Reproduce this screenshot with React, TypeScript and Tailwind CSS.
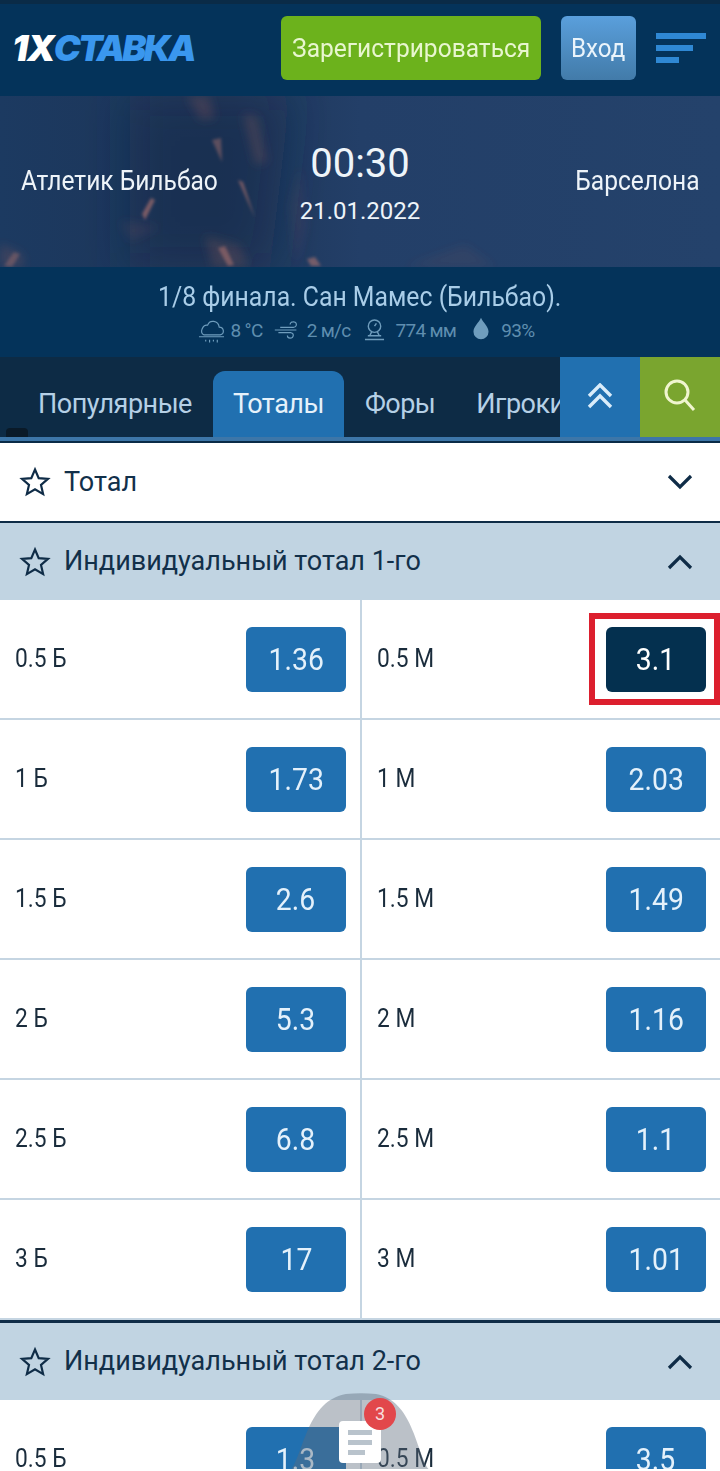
import React from "react";

const font = { fontFamily: "Roboto, 'Noto Sans', sans-serif" };

function Star() {
  return (
    <svg width="32" height="32" viewBox="0 0 32 32" fill="none" stroke="#0f2c47" strokeWidth="2.2" strokeLinejoin="miter" className="shrink-0">
      <path d="M16 3.5l3.7 8.6 9.3.8-7 6.1 2.1 9.1-8.1-4.8-8.1 4.8 2.1-9.1-7-6.1 9.3-.8z" />
    </svg>
  );
}

function Chevron({ up }: { up?: boolean }) {
  return (
    <svg width="26" height="16" viewBox="0 0 26 16" fill="none" stroke="#0f2c47" strokeWidth="3.2" className="shrink-0">
      <path d={up ? "M2 14L13 3l11 11" : "M2 2l11 11L24 2"} />
    </svg>
  );
}

function SectionHead({ title, open }: { title: string; open?: boolean }) {
  return (
    <div className={`flex items-center pl-[19px] pr-[27px] ${open ? "h-[77px] bg-[#c1d4e2]" : "h-[78px] bg-white"} `}>
      <Star />
      <span className="ml-[13px] flex-1 text-[27px] leading-none text-[#12304a]">{title}</span>
      <Chevron up={open} />
    </div>
  );
}

function Odd({ value, selected }: { value: string; selected?: boolean }) {
  return (
    <div className={`flex h-[65px] w-[100px] shrink-0 items-center justify-center rounded-[6px] ${selected ? "bg-[#04304f] text-white" : "bg-[#2170b0] text-[#e4f1fb]"}`}>
      <span className="inline-block origin-center scale-x-[0.915] text-[31px] leading-none">{value}</span>
    </div>
  );
}

function Row({ l, lo, r, ro, sel }: { l: string; lo: string; r: string; ro: string; sel?: boolean }) {
  return (
    <div className="flex h-[120px] border-b-2 border-[#c5d5e2] bg-white">
      <div className="flex w-[360px] items-center justify-between pl-[15px] pr-[14px] pt-[1px]">
        <span className="mb-[2px] origin-left scale-x-[0.91] text-[25px] leading-none text-[#1a2c3c]">{l}</span>
        <Odd value={lo} />
      </div>
      <div className="w-[2px] bg-[#c5d5e2]" />
      <div className="relative flex flex-1 items-center justify-between pl-[15px] pr-[14px] pt-[1px]">
        <span className="mb-[2px] origin-left scale-x-[0.91] text-[25px] leading-none text-[#1a2c3c]">{r}</span>
        <Odd value={ro} selected={sel} />
        {sel && <div className="absolute left-[227px] top-[13px] h-[92px] w-[131px] border-[6px] border-[#dc1f2e]" />}
      </div>
    </div>
  );
}

function BannerArt() {
  return (
    <svg className="absolute inset-0 h-full w-full" viewBox="0 0 720 171" preserveAspectRatio="none">
      <defs>
        <filter id="bl4" x="-50%" y="-50%" width="200%" height="200%"><feGaussianBlur stdDeviation="5" /></filter>
        <filter id="bl8" x="-50%" y="-50%" width="200%" height="200%"><feGaussianBlur stdDeviation="22" /></filter>
        <filter id="bl1" x="-50%" y="-50%" width="200%" height="200%"><feGaussianBlur stdDeviation="1.4" /></filter>
        <linearGradient id="bgfade" x1="0" x2="1" y1="0" y2="0">
          <stop offset="0" stopColor="#1c3a61" />
          <stop offset="0.3" stopColor="#1d3558" />
          <stop offset="0.5" stopColor="#233f68" />
          <stop offset="1" stopColor="#24426b" />
        </linearGradient>
      </defs>
      <rect width="720" height="171" fill="url(#bgfade)" />
      <path d="M130 0h160l-20 171H130z" fill="#1a2c4c" fillOpacity="0.5" filter="url(#bl8)" />
      <g filter="url(#bl4)" fill="#7d5257" fillOpacity="0.32">
        <path d="M187 0h22l6 22-14 2z" />
        <path d="M243 18l14 2 10 46-12 2z" />
        <path d="M0 148l22 10 2 13H0z" />
        <path d="M120 125l40 6-30 14z" fillOpacity="0.18" />
        <path d="M405 171l60-22 30 22z" fillOpacity="0.14" />
        <path d="M290 110l10-40 6 60-10 40z" fillOpacity="0.16" />
        <path d="M205 140l35 10 8 21h-35z" fillOpacity="0.3" />
      </g>
      <g filter="url(#bl1)" fill="#b9776f">
        <path d="M212 44l9-2 1 24z" fillOpacity="0.42" />
        <path d="M238 84l5 2 12 36z" fillOpacity="0.55" />
        <path d="M151 102l4 2-10 20-3-6z" fillOpacity="0.6" />
        <path d="M218 152l7-2 9 19-6 1z" fillOpacity="0.5" />
        <path d="M307 163l8-2 6 9h-10z" fillOpacity="0.55" />
        <path d="M4 170l10-14 6 2-8 13z" fillOpacity="0.35" />
      </g>
    </svg>
  );
}

function Weather() {
  const c = "#6f9dbd";
  return (
    <div className="ml-[12px] mt-[5px] flex items-center justify-center text-[19px] leading-none tracking-[-0.7px] text-[#5f8eaf]">
      <svg width="27" height="28" viewBox="0 0 28 28" fill="none" stroke={c} strokeWidth="1.2" className="mr-[6px]">
        <path d="M6 19h17c5-1 4-8-1-8-1-7-10-8-12-2-5-1-9 8-4 10zM1 21h26" />
        <path d="M8 24v2M12 24v3M16 24v2M20 24v3" />
      </svg>
      <span>8 °C</span>
      <svg width="27" height="24" viewBox="0 0 30 24" fill="none" stroke={c} strokeWidth="1.3" className="ml-[10px] mr-[7px]">
        <path d="M8 9h15c5-1 3-7-1-6-2 0-3 2-3 3M2 12h24M6 15h14c4 1 3 6-1 6-2 0-3-1-3-3" />
      </svg>
      <span>2 м/с</span>
      <svg width="21" height="26" viewBox="0 0 22 26" fill="none" stroke={c} strokeWidth="1.5" className="ml-[14px] mr-[10px]">
        <circle cx="11" cy="9" r="6.5" />
        <path d="M11 9l2-3M4 19h14M1 23h20M8 15l-2 4M14 15l2 4" />
      </svg>
      <span>774 мм</span>
      <svg width="16" height="23" viewBox="0 0 17 23" fill={c} className="mb-[3px] ml-[17px] mr-[12px]">
        <path d="M8.5 0c2 5 8 9 8 15a8 8 0 0 1-16 0c0-6 6-10 8-15z" />
      </svg>
      <span>93%</span>
    </div>
  );
}

const rows1 = [
  ["0.5 Б", "1.36", "0.5 М", "3.1"],
  ["1 Б", "1.73", "1 М", "2.03"],
  ["1.5 Б", "2.6", "1.5 М", "1.49"],
  ["2 Б", "5.3", "2 М", "1.16"],
  ["2.5 Б", "6.8", "2.5 М", "1.1"],
  ["3 Б", "17", "3 М", "1.01"],
];

export default function App() {
  return (
    <div className="relative h-[1469px] w-[720px] overflow-hidden bg-white" style={font}>
      {/* header */}
      <header className="flex h-[96px] items-center border-t-[4px] border-[#0a2b47] bg-[#04335a] pb-[4px] pl-[14px]">
        <div className="w-[267px] whitespace-nowrap text-[36px] font-black italic leading-none tracking-[-2.8px] text-[#3a97ee]" style={{ fontFamily: "Inter, Roboto, sans-serif" }}>
          <span className="-ml-[2px] tracking-[-1.4px] text-white">1X</span>СТАВКА
        </div>
        <div className="flex h-[64px] w-[260px] items-center justify-center rounded-[6px] bg-[#6cb21c] text-[#e8f6cf]">
          <span className="inline-block scale-x-[0.944] whitespace-nowrap text-[26px] leading-none">Зарегистрироваться</span>
        </div>
        <div className="ml-[20px] flex h-[64px] w-[75px] items-center justify-center rounded-[6px] bg-gradient-to-b from-[#5a9fdc] to-[#427ba9] text-[#eaf4fb]">
          <span className="inline-block scale-x-[0.93] text-[26px] leading-none">Вход</span>
        </div>
        <div className="ml-[20px] flex w-[50px] flex-col gap-[6px]">
          <div className="h-[6px] w-[50px] bg-[#2f88d4]" />
          <div className="h-[6px] w-[37px] bg-[#2f88d4]" />
          <div className="h-[6px] w-[23px] bg-[#2f88d4]" />
        </div>
      </header>

      {/* match banner */}
      <section className="relative flex h-[171px] items-center bg-[#24426b]">
        <BannerArt />
        <div className="relative flex w-full items-center justify-between pl-[21px] pr-[20px] text-[#eef4f9]">
          <span className="origin-left scale-x-[0.91] text-[27px] leading-none">Атлетик Бильбао</span>
          <span className="origin-right scale-x-[0.91] text-[27px] leading-none">Барселона</span>
          <div className="absolute left-0 right-0 top-[-24px] flex flex-col items-center">
            <span className="text-[40px] leading-none">00:30</span>
            <span className="mt-[15px] text-[24px] leading-none">21.01.2022</span>
          </div>
        </div>
      </section>

      {/* info */}
      <section className="flex h-[90px] flex-col items-center bg-[#04335a] pt-[17px]">
        <div className="scale-x-[0.918] whitespace-nowrap text-[27px] leading-none text-[#a9cde8]">1/8 финала. Сан Мамес (Бильбао).</div>
        <Weather />
      </section>

      {/* tabs */}
      <nav className="relative flex h-[84px] border-b-[4px] border-[#3d76a8] bg-[#0d2b45]">
        <div className="flex flex-1 items-end overflow-hidden pl-[17px] text-[27px] leading-none tracking-[-0.5px] text-[#b5d0e6]">
          <div className="flex h-[66px] shrink-0 items-center px-[21px]">Популярные</div>
          <div className="flex h-[66px] w-[131px] shrink-0 items-center justify-center rounded-t-[12px] bg-[#2170b0] text-[#e6f2fb]">Тоталы</div>
          <div className="flex h-[66px] shrink-0 items-center px-[21px]">Форы</div>
          <div className="flex h-[66px] shrink-0 items-center px-[20px]">Игроки</div>
        </div>
        <div className="flex h-[80px] w-[80px] shrink-0 items-center justify-center bg-[#2170b0]">
          <svg width="26" height="26" viewBox="0 0 26 26" fill="none" stroke="#d9ecfa" strokeWidth="3.4" className="mb-[2px]">
            <path d="M2 13L13 2l11 11M2 24l11-11 11 11" />
          </svg>
        </div>
        <div className="flex h-[80px] w-[80px] shrink-0 items-center justify-center bg-[#7aa52f]">
          <svg width="34" height="34" viewBox="0 0 34 34" fill="none" stroke="#f0f5cf" strokeWidth="3" className="mb-[4px]">
            <circle cx="14" cy="14" r="11" />
            <path d="M22 22l9 10" />
          </svg>
        </div>
        <div className="absolute left-[6px] top-[71px] h-[9px] w-[22px] rounded-t-[4px] bg-[#0a1a28]" />
      </nav>

      <div className="h-[2px] bg-[#0a2b47]" />
      <SectionHead title="Тотал" />
      <div className="h-[2px] bg-[#0f2c47]" />
      <SectionHead title="Индивидуальный тотал 1-го" open />
      {rows1.map((r, i) => (
        <Row key={i} l={r[0]} lo={r[1]} r={r[2]} ro={r[3]} sel={i === 0} />
      ))}
      <div className="h-[3px] bg-[#0f2c47]" />
      <SectionHead title="Индивидуальный тотал 2-го" open />
      <Row l="0.5 Б" lo="1.3" r="0.5 М" ro="3.5" />

      {/* floating coupon */}
      <svg className="absolute left-[280px] top-[1393px]" width="160" height="78" viewBox="0 0 160 78">
        <path d="M10 78C24 62 26 8 66 1c10-1 20-1 30 0 38 7 40 60 54 77z" fill="#5c6c7c" fillOpacity="0.42" />
      </svg>
      <div className="absolute left-[339px] top-[1421px] flex h-[42px] w-[42px] flex-col items-center gap-[5px] rounded-[4px] bg-white pt-[9px]">
        <div className="h-[5px] w-[24px] bg-[#b9c3cc]" />
        <div className="h-[5px] w-[24px] bg-[#b9c3cc]" />
        <div className="ml-[9px] h-[5px] w-[17px] self-start bg-[#b9c3cc]" />
      </div>
      <div className="absolute left-[364px] top-[1398px] flex h-[32px] w-[32px] items-center justify-center rounded-full bg-[#e2474b] text-[18px] leading-none text-[#f7dede]">
        3
      </div>
    </div>
  );
}
